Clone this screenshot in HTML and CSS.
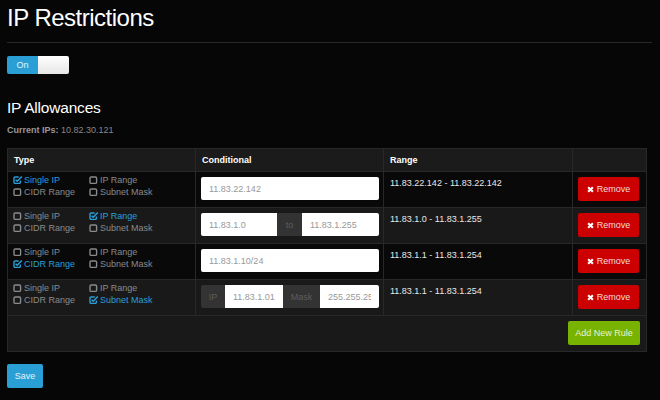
FILE: index.html
```html
<!DOCTYPE html>
<html lang="en">
<head>
<meta charset="utf-8">
<title>IP Restrictions</title>
<link rel="stylesheet" href="styles.css">
</head>
<body>
<div class="page">
  <h1 class="title">IP Restrictions</h1>
  <hr class="rule">
  <div class="toggle"><span class="toggle-on">On</span><span class="toggle-knob"></span></div>
  <h2 class="subtitle">IP Allowances</h2>
  <p class="current"><b>Current IPs:</b> 10.82.30.121</p>

  <table class="rules">
    <colgroup><col class="w-type"><col class="w-cond"><col class="w-range"><col class="w-act"></colgroup>
    <thead>
      <tr><th>Type</th><th>Conditional</th><th>Range</th><th></th></tr>
    </thead>
    <tbody>
      <tr class="dark">
        <td class="type">
          <div class="opts">
            <span class="opt on"><svg class="cb" viewBox="0 0 10 10"><path d="M7.4 5.6V7.3a1.1 1.1 0 0 1-1.1 1.1H2.1A1.1 1.1 0 0 1 1 7.3V3.1A1.1 1.1 0 0 1 2.1 2h3.6"/><path class="ck" d="M2.6 4.7 4.2 6.3 8.8 1.6"/></svg>Single IP</span>
            <span class="opt"><svg class="cb" viewBox="0 0 10 10"><rect x="1" y="2" width="6.6" height="6.4" rx="1.2"/></svg>IP Range</span>
            <span class="opt"><svg class="cb" viewBox="0 0 10 10"><rect x="1" y="2" width="6.6" height="6.4" rx="1.2"/></svg>CIDR Range</span>
            <span class="opt"><svg class="cb" viewBox="0 0 10 10"><rect x="1" y="2" width="6.6" height="6.4" rx="1.2"/></svg>Subnet Mask</span>
          </div>
        </td>
        <td class="cond"><input class="field" type="text" value="11.83.22.142"></td>
        <td class="range">11.83.22.142 - 11.83.22.142</td>
        <td class="act"><button class="btn btn-remove"><svg class="x" viewBox="0 0 8 8"><path d="M1.3 1.3 6.7 6.7M6.7 1.3 1.3 6.7"/></svg>Remove</button></td>
      </tr>
      <tr class="light">
        <td class="type">
          <div class="opts">
            <span class="opt"><svg class="cb" viewBox="0 0 10 10"><rect x="1" y="2" width="6.6" height="6.4" rx="1.2"/></svg>Single IP</span>
            <span class="opt on"><svg class="cb" viewBox="0 0 10 10"><path d="M7.4 5.6V7.3a1.1 1.1 0 0 1-1.1 1.1H2.1A1.1 1.1 0 0 1 1 7.3V3.1A1.1 1.1 0 0 1 2.1 2h3.6"/><path class="ck" d="M2.6 4.7 4.2 6.3 8.8 1.6"/></svg>IP Range</span>
            <span class="opt"><svg class="cb" viewBox="0 0 10 10"><rect x="1" y="2" width="6.6" height="6.4" rx="1.2"/></svg>CIDR Range</span>
            <span class="opt"><svg class="cb" viewBox="0 0 10 10"><rect x="1" y="2" width="6.6" height="6.4" rx="1.2"/></svg>Subnet Mask</span>
          </div>
        </td>
        <td class="cond">
          <div class="group">
            <input class="field g-from" type="text" value="11.83.1.0">
            <span class="addon a-to">to</span>
            <input class="field g-fill" type="text" value="11.83.1.255">
          </div>
        </td>
        <td class="range">11.83.1.0 - 11.83.1.255</td>
        <td class="act"><button class="btn btn-remove"><svg class="x" viewBox="0 0 8 8"><path d="M1.3 1.3 6.7 6.7M6.7 1.3 1.3 6.7"/></svg>Remove</button></td>
      </tr>
      <tr class="dark">
        <td class="type">
          <div class="opts">
            <span class="opt"><svg class="cb" viewBox="0 0 10 10"><rect x="1" y="2" width="6.6" height="6.4" rx="1.2"/></svg>Single IP</span>
            <span class="opt"><svg class="cb" viewBox="0 0 10 10"><rect x="1" y="2" width="6.6" height="6.4" rx="1.2"/></svg>IP Range</span>
            <span class="opt on"><svg class="cb" viewBox="0 0 10 10"><path d="M7.4 5.6V7.3a1.1 1.1 0 0 1-1.1 1.1H2.1A1.1 1.1 0 0 1 1 7.3V3.1A1.1 1.1 0 0 1 2.1 2h3.6"/><path class="ck" d="M2.6 4.7 4.2 6.3 8.8 1.6"/></svg>CIDR Range</span>
            <span class="opt"><svg class="cb" viewBox="0 0 10 10"><rect x="1" y="2" width="6.6" height="6.4" rx="1.2"/></svg>Subnet Mask</span>
          </div>
        </td>
        <td class="cond"><input class="field" type="text" value="11.83.1.10/24"></td>
        <td class="range">11.83.1.1 - 11.83.1.254</td>
        <td class="act"><button class="btn btn-remove"><svg class="x" viewBox="0 0 8 8"><path d="M1.3 1.3 6.7 6.7M6.7 1.3 1.3 6.7"/></svg>Remove</button></td>
      </tr>
      <tr class="light">
        <td class="type">
          <div class="opts">
            <span class="opt"><svg class="cb" viewBox="0 0 10 10"><rect x="1" y="2" width="6.6" height="6.4" rx="1.2"/></svg>Single IP</span>
            <span class="opt"><svg class="cb" viewBox="0 0 10 10"><rect x="1" y="2" width="6.6" height="6.4" rx="1.2"/></svg>IP Range</span>
            <span class="opt"><svg class="cb" viewBox="0 0 10 10"><rect x="1" y="2" width="6.6" height="6.4" rx="1.2"/></svg>CIDR Range</span>
            <span class="opt on"><svg class="cb" viewBox="0 0 10 10"><path d="M7.4 5.6V7.3a1.1 1.1 0 0 1-1.1 1.1H2.1A1.1 1.1 0 0 1 1 7.3V3.1A1.1 1.1 0 0 1 2.1 2h3.6"/><path class="ck" d="M2.6 4.7 4.2 6.3 8.8 1.6"/></svg>Subnet Mask</span>
          </div>
        </td>
        <td class="cond">
          <div class="group">
            <span class="addon a-ip">IP</span>
            <input class="field g-ip" type="text" value="11.83.1.01">
            <span class="addon a-mask">Mask</span>
            <input class="field g-fill" type="text" value="255.255.255.0">
          </div>
        </td>
        <td class="range">11.83.1.1 - 11.83.1.254</td>
        <td class="act"><button class="btn btn-remove"><svg class="x" viewBox="0 0 8 8"><path d="M1.3 1.3 6.7 6.7M6.7 1.3 1.3 6.7"/></svg>Remove</button></td>
      </tr>
    </tbody>
    <tfoot>
      <tr><td class="foot" colspan="4"><button class="btn btn-add">Add New Rule</button></td></tr>
    </tfoot>
  </table>

  <button class="btn btn-save">Save</button>
</div>
</body>
</html>
```

FILE: styles.css
```css
html, body {
  margin: 0;
  padding: 0;
  background: #060606;
}
body {
  font-family: "Liberation Sans", Arial, sans-serif;
  color: #888;
  font-size: 9px;
}
.page {
  padding: 3px 8px 0 7px;
}
.title {
  margin: 0;
  font-size: 24px;
  line-height: 30px;
  font-weight: normal;
  letter-spacing: -0.5px;
  color: #fff;
}
.rule {
  margin: 9px 0 13px;
  border: 0;
  border-top: 1px solid #282828;
  height: 0;
}
.toggle {
  display: flex;
  width: 62px;
  height: 18px;
  border-radius: 2px;
  overflow: hidden;
}
.toggle-on {
  width: 31px;
  background: #2a9fd6;
  color: #e8f4fb;
  font-size: 9px;
  line-height: 18px;
  text-align: center;
}
.toggle-knob {
  flex: 1;
  background: linear-gradient(#fff, #e6e6e6);
}
.subtitle {
  margin: 24px 0 0;
  font-size: 15.5px;
  line-height: 20px;
  font-weight: normal;
  letter-spacing: -0.2px;
  color: #fff;
}
.current {
  margin: 5px 0 0;
  font-size: 9px;
  line-height: 14px;
  color: #888;
}
.current b {
  color: #999;
}
.rules {
  margin-top: 11px;
  width: 639px;
  table-layout: fixed;
  border-collapse: collapse;
  border: 1px solid #262626;
}
.w-type { width: 188px; }
.w-cond { width: 188px; }
.w-range { width: 189px; }
.w-act { width: 74px; }
.rules th {
  padding: 5px 6px 5px;
  line-height: 12px;
  text-align: left;
  font-weight: bold;
  font-size: 9px;
  color: #fff;
  background: #1b1b1b;
  border: 1px solid #282828;
}
.rules td {
  border: 1px solid #282828;
  padding: 0 6px;
  vertical-align: top;
}
.dark td { background: #090909; }
.light td { background: #191919; }
.rules td.type {
  padding: 2px 0 0 5px;
}
.opts {
  display: grid;
  grid-template-columns: 76px 1fr;
  line-height: 12px;
}
.opt {
  display: flex;
  align-items: center;
  color: #8a8a8a;
  white-space: nowrap;
}
.opt.on { color: #2a9fd6; }
.cb {
  width: 10px;
  height: 10px;
  margin-right: 1px;
  fill: none;
  stroke: currentColor;
  stroke-width: 1.4;
}
.cb .ck { stroke-width: 1.5; }
.rules td.cond {
  padding: 5px 4px 6px 5px;
}
.field {
  display: block;
  box-sizing: border-box;
  width: 100%;
  height: 23px;
  margin: 0;
  padding: 0 8px;
  border: 0;
  border-radius: 2px;
  background: #fff;
  color: #999;
  font-family: "Liberation Sans", Arial, sans-serif;
  font-size: 9px;
  outline: none;
}
.group {
  display: flex;
  height: 23px;
}
.group .field { border-radius: 0; }
.group > :first-child { border-radius: 2px 0 0 2px; }
.group > :last-child { border-radius: 0 2px 2px 0; }
.g-from { width: 76px; flex: none; }
.g-ip { width: 58px; flex: none; }
.g-fill { flex: 1; min-width: 0; width: auto; }
.addon {
  flex: none;
  display: flex;
  align-items: center;
  justify-content: center;
  background: #333;
  color: #5e5e5e;
  font-size: 9px;
}
.a-to { width: 25px; }
.a-ip { width: 24px; }
.a-mask { width: 37px; }
.rules td.range {
  padding: 5px 6px 0;
  line-height: 12px;
  color: #e8e8e8;
  font-size: 9px;
}
.rules td.act {
  padding: 5px 7px 6px 5px;
}
.btn {
  border: 0;
  border-radius: 2px;
  height: 24px;
  padding: 0;
  font-family: "Liberation Sans", Arial, sans-serif;
  font-size: 9px;
  color: #fff;
  cursor: pointer;
}
.btn-remove {
  display: flex;
  align-items: center;
  justify-content: center;
  width: 61px;
  margin-left: auto;
  background: #cc0000;
  color: #f4dada;
}
.x {
  width: 7px;
  height: 7px;
  margin-right: 3px;
  stroke: #fff;
  stroke-width: 2.4;
  fill: none;
}
.rules td.foot {
  background: #191919;
  padding: 5px 6px 6px 0;
}
.btn-add {
  display: block;
  width: 72px;
  margin-left: auto;
  background: #77b300;
  color: #e8f3d6;
}
.btn-save {
  display: block;
  margin-top: 12px;
  width: 36px;
  background: #2a9fd6;
  color: #e6f3fa;
}
```
